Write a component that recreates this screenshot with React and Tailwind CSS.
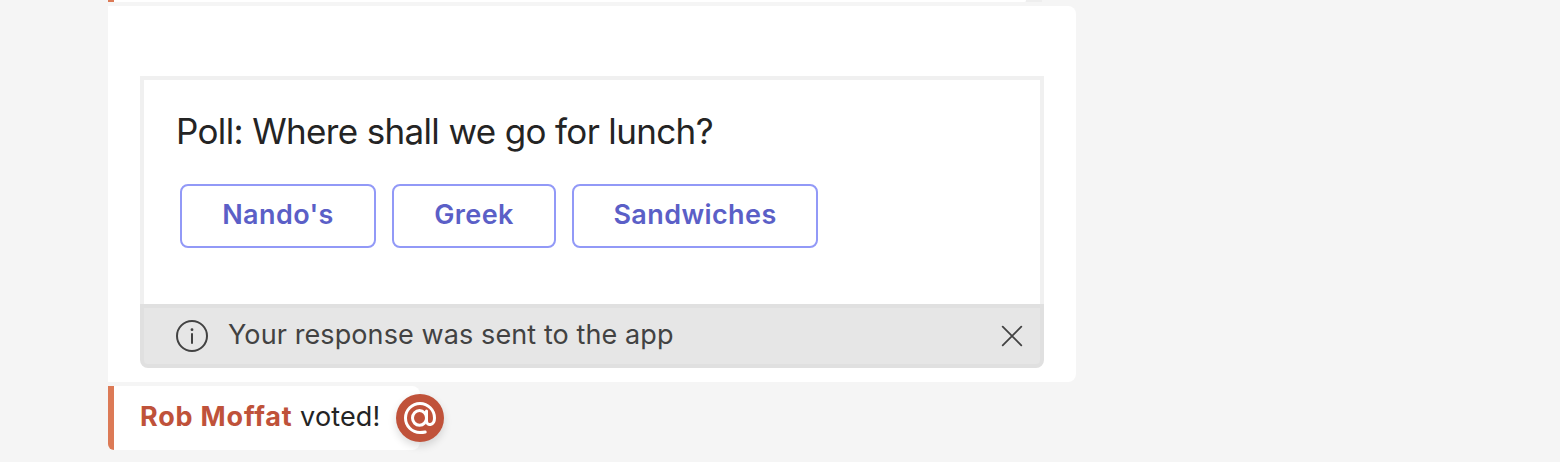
export default function App() {
  return (
    <main className="h-[462px] w-full overflow-hidden bg-[#f5f5f5] pl-[108px] font-['Inter',sans-serif] text-[#242424]">
      <div className="flex h-[2px]">
        <div className="w-1.5 bg-[#dc7a56]" />
        <div className="w-[912px] rounded-br-[3px] bg-white" />
        <div className="w-4 bg-[#eeeeee]" />
      </div>
      <section className="mt-1 h-[376px] w-[968px] rounded-r-lg bg-white px-8 pt-[70px]">
        <div className="flex h-[292px] w-[904px] flex-col">
          <div className="h-[228px] border-4 border-b-0 border-[#f0f0f0] px-8 pt-[25px]">
            <h1 className="h-[52px] whitespace-nowrap text-[35px] leading-[52px] tracking-[-0.65px]">Poll: Where shall we go for lunch?</h1>
            <div className="ml-1 mt-[27px] flex gap-4 text-[27px] font-semibold tracking-[0.4px] text-[#5b5fc7]">
              <button className="h-16 w-[196px] rounded-lg border-2 border-[#9299f7] pb-px">Nando's</button>
              <button className="h-16 w-[164px] rounded-lg border-2 border-[#9299f7] pb-px">Greek</button>
              <button className="h-16 w-[246px] rounded-lg border-2 border-[#9299f7] pb-px">Sandwiches</button>
            </div>
          </div>
          <div className="flex h-16 items-center rounded-b-lg border-4 border-[#e0e0e0] bg-[#e6e6e6] pl-8 pr-4 text-[#424242]">
            <svg width="32" height="32" viewBox="0 0 32 32" fill="none" stroke="currentColor" strokeWidth="2"><circle cx="16" cy="16" r="15" /><path d="M16 14v9" strokeLinecap="round" /><circle cx="16" cy="9.7" r="1.4" fill="currentColor" stroke="none" /></svg>
            <span className="ml-5 whitespace-nowrap pb-[3px] text-[27px] leading-10 tracking-[0.1px]">Your response was sent to the app</span>
            <svg className="ml-auto" width="24" height="24" viewBox="0 0 24 24" fill="none" stroke="currentColor" strokeWidth="1.8" strokeLinecap="round"><path d="M2.7 2.7l18.6 18.6M21.3 2.7l-18.6 18.6" /></svg>
          </div>
        </div>
      </section>
      <section className="mt-1 flex h-16 w-[312px]">
        <div className="w-1.5 shrink-0 rounded-bl-md bg-[#dc7a56]" />
        <div className="flex w-[306px] shrink-0 items-center rounded-r-lg bg-white pl-[26px]">
          <p className="w-[256px] shrink-0 whitespace-nowrap pb-[3px] text-[27px] leading-10"><strong className="font-bold tracking-[0.8px] text-[#bf523a]">Rob Moffat</strong> <span className="tracking-[0.15px]">voted!</span></p>
          <span className="flex size-12 shrink-0 items-center justify-center rounded-full bg-[#c0523a] text-white shadow-[0_4px_8px_rgba(0,0,0,0.14)]">
            <svg aria-label="Mention" width="32" height="32" viewBox="0 0 32 32" fill="none" stroke="currentColor" strokeWidth="3" strokeLinecap="round" strokeLinejoin="round"><ellipse cx="15.5" cy="15.9" rx="7" ry="7.4" /><path d="M22.5 9v10c0 5.4 8 5 8-3A14.5 14.5 0 1 0 16 30.5c2 0 3.5-.1 5.2-.5" /></svg>
          </span>
        </div>
      </section>
    </main>
  );
}
